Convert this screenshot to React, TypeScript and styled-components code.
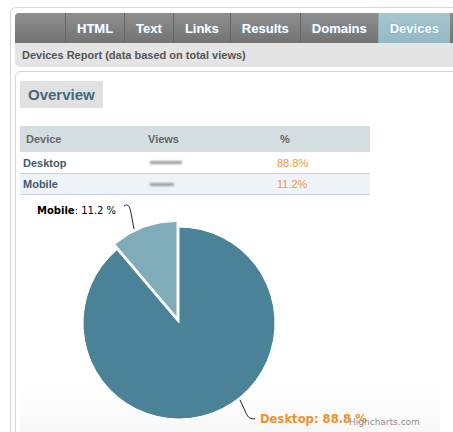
import React from 'react';
import styled, { createGlobalStyle } from 'styled-components';

const GlobalStyle = createGlobalStyle`
    html, body {
        margin: 0;
        padding: 0;
        background: #fff;
        overflow: hidden;
    }
    body {
        font-family: "Liberation Sans", Arial, sans-serif;
    }
`;

const StyledPage = styled.div`
    width: 453px;
    height: 432px;
    overflow: hidden;
`;

const StyledOuterPanel = styled.div`
    margin: 7px 0 0 10px;
    width: 470px;
    min-height: 440px;
    border: 1px solid #d6d6d6;
    border-radius: 6px;
    padding: 5px 4px 0 4px;
    box-sizing: border-box;
`;

const StyledTabBar = styled.div`
    display: flex;
    height: 30px;
    background: linear-gradient(#8f8f8f, #727272);
    border-radius: 4px 0 0 0;
`;

const StyledTabSpacer = styled.div`
    width: 50px;
`;

const StyledTab = styled.div<{ $active?: boolean }>`
    display: flex;
    align-items: center;
    padding: 0 11px;
    border-left: 1px solid ${props => props.$active ? '#8eafb9' : '#666'};
    font-size: 13px;
    font-weight: bold;
    color: #fff;
    text-shadow: 0 0 2px #6d9ec4;
    background: ${props => props.$active ? 'linear-gradient(#a6c6d0, #94b9c4)' : 'transparent'};
`;

const StyledSubHeader = styled.div`
    height: 24px;
    display: flex;
    align-items: center;
    padding-left: 7px;
    background: #e4e4e4;
    border-radius: 0 0 0 5px;
    font-size: 11px;
    font-weight: bold;
    color: #555;
`;

const StyledInnerPanel = styled.div`
    margin-top: 4px;
    border: 1px solid #d6d6d6;
    border-radius: 6px;
    padding: 9px 4px 0 4px;
    min-height: 400px;
`;

const StyledOverview = styled.h2`
    display: inline-block;
    margin: 0;
    background: #e1e1e1;
    height: 27px;
    line-height: 27px;
    padding: 0 8px;
    font-size: 15px;
    font-weight: bold;
    color: #41697d;
`;

const StyledTable = styled.div`
    margin-top: 18px;
    width: 350px;
`;

const StyledRow = styled.div<{ $kind: 'head' | 'even' | 'odd' }>`
    display: grid;
    grid-template-columns: 122px 132px 1fr;
    align-items: center;
    height: ${props => props.$kind === 'head' ? '26px' : props.$kind === 'odd' ? '20px' : '21px'};
    background: ${props => props.$kind === 'head' ? '#d3dde2' : props.$kind === 'odd' ? '#eef3f8' : '#fff'};
    border-top: ${props => props.$kind === 'odd' ? '1px solid #c9d3e4' : 'none'};
    border-bottom: ${props => props.$kind === 'odd' ? '1px solid #c9d3e4' : 'none'};
    font-size: 11px;
`;

const StyledHeadCell = styled.div`
    padding-left: 6px;
    font-weight: bold;
    color: #666;
`;

const StyledDeviceCell = styled.div`
    padding-left: 3px;
    font-weight: bold;
    color: #3f5c6d;
`;

const StyledViewsCell = styled.div`
    padding-left: 8px;
`;

const StyledSmudge = styled.div<{ $w: number }>`
    width: ${props => props.$w}px;
    height: 3px;
    background: #9a9a9a;
    filter: blur(1.3px);
`;

const StyledPercentCell = styled.div`
    padding-left: 3px;
    color: #f29831;
`;

const StyledChart = styled.div`
    width: 420px;
    height: 240px;
    background: linear-gradient(#fff 80%, #f7f7f7);
`;

const devices = [
    { name: 'Desktop', smudge: 32, pct: '88.8%' },
    { name: 'Mobile', smudge: 24, pct: '11.2%' },
];

const tabs = ['HTML', 'Text', 'Links', 'Results', 'Domains', 'Devices'];

const PieChart = () => (
    <StyledChart>
        <svg width="420" height="240" viewBox="0 0 420 240">
            <path
                d="M159 128 L159 32 A96 96 0 1 1 96.91 54.78 Z"
                fill="#4a8297"
                stroke="#fff"
                strokeWidth="1"
            />
            <path
                d="M157 122.4 L94.91 49.18 A96 96 0 0 1 157 26.4 Z"
                fill="#80acb9"
                stroke="#fff"
                strokeWidth="1"
            />
            <path d="M104 11 C108 8 110 12 111 18 L114 34" fill="none" stroke="#222" strokeWidth="1" />
            <text x="17" y="19" fontFamily="DejaVu Sans, Verdana, sans-serif" fontSize="10" fill="#000">
                <tspan fontWeight="bold">Mobile</tspan>: 11.2 %
            </text>
            <path d="M220 205 L226 218 C228 223 231 224 235 224" fill="none" stroke="#222" strokeWidth="1" />
            <text x="240" y="228" fontFamily="DejaVu Sans, Verdana, sans-serif" fontSize="11.6" fontWeight="bold" fill="#f0902a">
                Desktop: 88.8 %
            </text>
            <text x="329" y="230" fontFamily="DejaVu Sans, Verdana, sans-serif" fontSize="9" fill="#909090">
                Highcharts.com
            </text>
        </svg>
    </StyledChart>
);

export default function App() {
    return (
        <StyledPage>
            <GlobalStyle />
            <StyledOuterPanel>
                <StyledTabBar>
                    <StyledTabSpacer />
                    {tabs.map(t => (
                        <StyledTab key={t} $active={t === 'Devices'}>{t}</StyledTab>
                    ))}
                </StyledTabBar>
                <StyledSubHeader>Devices Report (data based on total views)</StyledSubHeader>
                <StyledInnerPanel>
                    <StyledOverview>Overview</StyledOverview>
                    <StyledTable>
                        <StyledRow $kind="head">
                            <StyledHeadCell>Device</StyledHeadCell>
                            <StyledHeadCell>Views</StyledHeadCell>
                            <StyledHeadCell>%</StyledHeadCell>
                        </StyledRow>
                        {devices.map((d, i) => (
                            <StyledRow key={d.name} $kind={i % 2 ? 'odd' : 'even'}>
                                <StyledDeviceCell>{d.name}</StyledDeviceCell>
                                <StyledViewsCell>
                                    <StyledSmudge $w={d.smudge} />
                                </StyledViewsCell>
                                <StyledPercentCell>{d.pct}</StyledPercentCell>
                            </StyledRow>
                        ))}
                    </StyledTable>
                    <PieChart />
                </StyledInnerPanel>
            </StyledOuterPanel>
        </StyledPage>
    );
}
